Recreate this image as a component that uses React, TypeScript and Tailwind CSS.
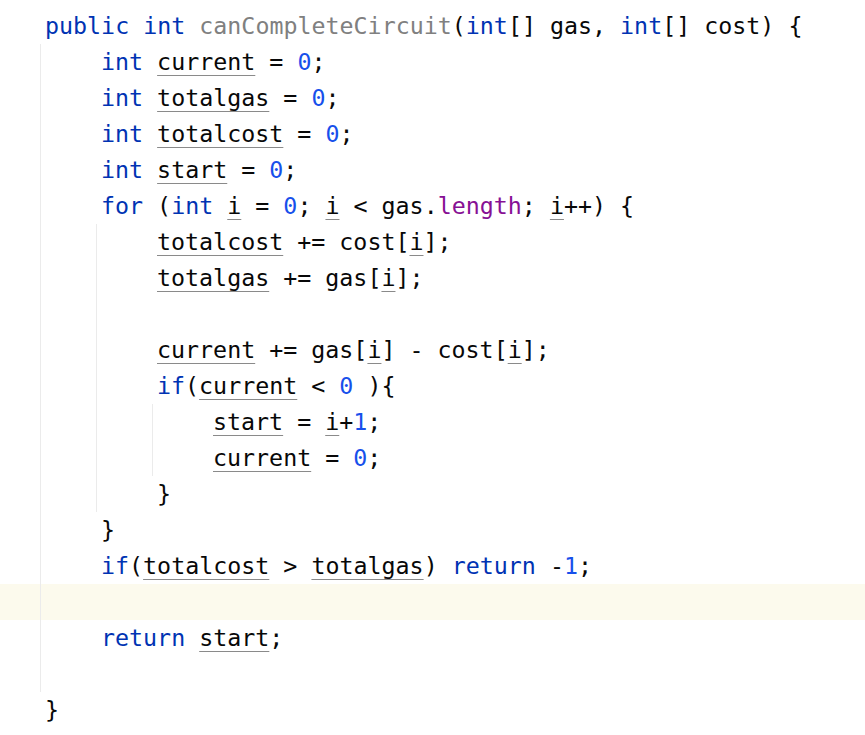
import React from "react";

type Tok = { t: string; c?: string; u?: boolean };

const K = "#0033b3"; // keyword
const N = "#1750eb"; // number
const F = "#871094"; // field
const G = "#808080"; // unused method

const k = (t: string): Tok => ({ t, c: K });
const n = (t: string): Tok => ({ t, c: N });
const p = (t: string): Tok => ({ t });
const v = (t: string): Tok => ({ t, u: true });

function Code({ toks }: { toks: Tok[] }) {
  return (
    <>
      {toks.map((tk, i) =>
        tk.u ? (
          <span
            key={i}
            className="underline decoration-[#8a8a8a] decoration-1 underline-offset-[5px]"
            style={tk.c ? { color: tk.c } : undefined}
          >
            {tk.t}
          </span>
        ) : (
          <span key={i} style={tk.c ? { color: tk.c } : undefined}>
            {tk.t}
          </span>
        )
      )}
    </>
  );
}

function Line({ toks, pad = "pl-[60px]" }: { toks?: Tok[]; pad?: string }) {
  return (
    <div className={`h-[36px] flex items-center whitespace-pre ${pad}`}>
      {toks ? <Code toks={toks} /> : null}
    </div>
  );
}

export default function App() {
  return (
    <div
      className="w-[865px] h-[735px] bg-white text-[#080808] overflow-hidden pt-[8px]"
      style={{ fontFamily: '"DejaVu Sans Mono", "Liberation Mono", monospace', fontSize: "23.3px" }}
    >
      <Line
        pad="pl-[45px]"
        toks={[
          k("public int "),
          { t: "canCompleteCircuit", c: G },
          p("("),
          k("int"),
          p("[] gas, "),
          k("int"),
          p("[] cost) {"),
        ]}
      />
      <div className="ml-[40px] border-l border-[#ebebeb]">
        <Line toks={[k("int "), v("current"), p(" = "), n("0"), p(";")]} />
        <Line toks={[k("int "), v("totalgas"), p(" = "), n("0"), p(";")]} />
        <Line toks={[k("int "), v("totalcost"), p(" = "), n("0"), p(";")]} />
        <Line toks={[k("int "), v("start"), p(" = "), n("0"), p(";")]} />
        <Line
          toks={[
            k("for "),
            p("("),
            k("int "),
            v("i"),
            p(" = "),
            n("0"),
            p("; "),
            v("i"),
            p(" < gas."),
            { t: "length", c: F },
            p("; "),
            v("i"),
            p("++) {"),
          ]}
        />
        <div className="ml-[55px] border-l border-[#ebebeb]">
          <Line toks={[v("totalcost"), p(" += cost["), v("i"), p("];")]} />
          <Line toks={[v("totalgas"), p(" += gas["), v("i"), p("];")]} />
          <Line />
          <Line
            toks={[v("current"), p(" += gas["), v("i"), p("] - cost["), v("i"), p("];")]}
          />
          <Line toks={[k("if"), p("("), v("current"), p(" < "), n("0"), p(" ){")]} />
          <div className="ml-[55px] border-l border-[#ebebeb]">
            <Line toks={[v("start"), p(" = "), v("i"), p("+"), n("1"), p(";")]} />
            <Line toks={[v("current"), p(" = "), n("0"), p(";")]} />
          </div>
          <Line toks={[p("}")]} />
        </div>
        <Line toks={[p("}")]} />
        <Line
          toks={[
            k("if"),
            p("("),
            v("totalcost"),
            p(" > "),
            v("totalgas"),
            p(") "),
            k("return "),
            p("-"),
            n("1"),
            p(";"),
          ]}
        />
        <div className="-ml-[41px] h-[36px] flex bg-[#fcfaed]">
          <div className="w-[40px]" />
          <div className="w-px bg-[#ebebeb]" />
        </div>
        <Line toks={[k("return "), v("start"), p(";")]} />
        <Line />
      </div>
      <Line pad="pl-[45px]" toks={[p("}")]} />
    </div>
  );
}
